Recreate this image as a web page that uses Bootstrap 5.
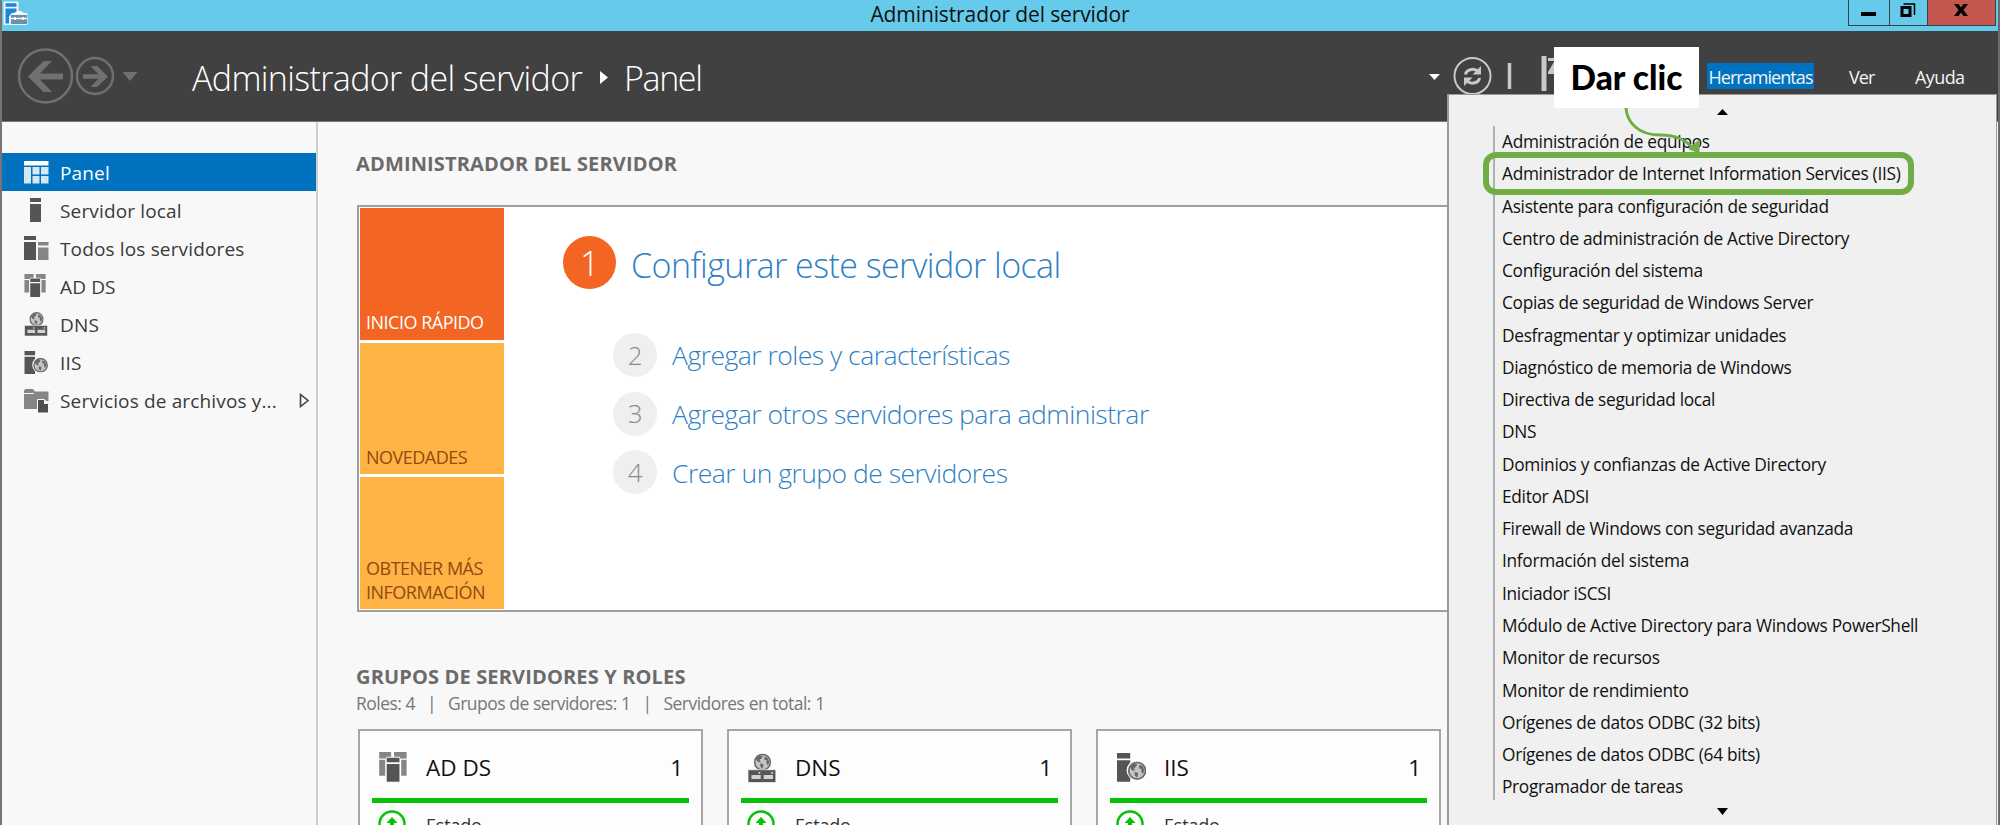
<!DOCTYPE html>
<html lang="es">
<head>
<meta charset="utf-8">
<title>Administrador del servidor</title>
<link rel="stylesheet" href="https://cdn.jsdelivr.net/npm/bootstrap@5.3.0/dist/css/bootstrap.min.css">
<style>
  body { font-family: "Open Sans", "Noto Sans", sans-serif; background: #f8f8f8; color: #333; }
  svg { display: block; flex: none; }
  .win { width: 2000px; height: 825px; border-left: 2px solid #757575; border-right: 2px solid #6b6b6b; }
  .titlebar { height: 31px; background: #66caea; color: #111; }
  .titlebar .caption { font-size: 21px; line-height: 29px; letter-spacing: -.11px; }
  .titlebar .app { left: 1px; top: 1px; }
  .winbtns { right: 2px; top: 0; }
  .winbtns > span { border: 1px solid #33434a; border-top: 0; height: 26px; margin-left: -1px; }
  .wb1 { width: 42px; } .wb2 { width: 39px; } .wb3 { width: 69px; background: #c4584e; }
  .topbar { height: 91px; background: #414141; color: #fff; border-bottom: 1px solid #777; }
  .nav-arrows { padding: 17px 0 0 15px; width: 190px; }
  .crumbs { font-weight: 300; font-size: 34px; line-height: 48px; padding-top: 23px; letter-spacing: -.64px; }
  .crumbs .here { letter-spacing: -1.4px; }
  .crumbs svg { margin: 17px 16px 0 18px; }
  .menu-a { font-size: 18px; line-height: 26px; letter-spacing: -.95px; color: #f4f4f4; padding-top: 32px; }
  .menu-a span { padding-top: 1px; }
  .menu-a .on { background: #0072c0; width: 107px; height: 26px; }
  .ver { width: 27px; margin: 0 39px 0 35px; }
  .ayuda { width: 50px; margin-right: 33px; letter-spacing: -.6px; }
  .side { width: 316px; border-right: 2px solid #cfcfcf; padding-top: 31px; }
  .side .item { height: 38.1px; font-size: 19px; letter-spacing: .15px; padding-left: 22px; color: #3a3a3a; }
  .side .item svg { margin-right: 11px; }
  .side .item span { padding-top: 2px; }
  .side .item.on { background: #0072c0; color: #fff; }
  .side .item .more { margin: 0 6px 0 auto; }
  .main { padding-left: 38px; padding-top: 29px; }
  .hd { font-weight: 700; font-size: 20px; line-height: 26px; letter-spacing: .15px; color: #6b6b6b; }
  .welcome { width: 1180px; height: 407px; margin: 28px 0 0 1px; background: #fff; border: 2px solid #a0a0a0; padding: 1px; }
  .tiles { width: 144px; gap: 3px; }
  .tile { height: 132px; background: #ffb345; color: #8f4a12; font-size: 18px; line-height: 23.3px; letter-spacing: -.5px; padding: 0 0 5px 6px; }
  .tile.hot { background: #f36523; color: #fff; }
  .steps { padding: 28px 0 0 59px; }
  .dot { width: 44px; height: 44px; border-radius: 50%; background: #efefef; color: #8a8a8a; font-size: 26px; margin-right: 15px; font-weight: 300; }
  .dot.big { width: 53px; height: 53px; background: #f36523; color: #fff; font-size: 34px; padding-top: 2px; }
  .step { color: #2e80c4; font-weight: 300; font-size: 26.5px; height: 58.6px; margin-left: 50px; letter-spacing: -.51px; }
  .step .lbl { padding-top: 2px; }
  .step.big { font-size: 34px; height: 53px; margin: 0 0 37px; letter-spacing: -.55px; }
  .step.big .lbl { padding-top: 5px; }
  .grp { margin-top: 52px; }
  .counts { font-size: 17.5px; line-height: 26px; letter-spacing: -.53px; color: #777; word-spacing: .2px; }
  .counts i { width: 33px; text-align: center; font-style: normal; }
  .roles { gap: 24px; margin: 13px 0 0 2px; }
  .role { flex: none; width: 345px; height: 200px; border: 2px solid #a6a6a6; background: #fdfdfd; padding: 0 12px; color: #111; }
  .role .top { height: 67px; padding: 6px 6px 0 7px; font-size: 22.5px; }
  .role .nm { margin-left: 18px; }
  .role .rule { height: 5px; background: #06c206; }
  .role .st { font-size: 18px; padding: 7px 0 0 6px; letter-spacing: -.2px; color: #333; }
  .role .st span { line-height: 24px; margin: 3px 0 0 20px; }
  .tools { left: 1447px; top: 94px; width: 550px; height: 731px; background: #f0f0f0; border: 1px solid #999; border-left-width: 2px; border-bottom: 0; color: #111; }
  .tools .up { margin: 14px 0 0 268px; }
  .tools .down { margin: 8px 0 0 268px; }
  .tools .list { margin: 11px 0 0 44px; border-left: 2px solid #b0b0b0; padding-left: 7px; height: 674px; font-size: 17.3px; line-height: 32.27px; letter-spacing: -.3px; white-space: nowrap; }
  .hl { left: 1483px; top: 152px; width: 431px; height: 43px; border: 6px solid #70ad47; border-radius: 13px; }
  .tip { left: 1554px; top: 47px; width: 145px; height: 61px; background: #fff; color: #000; font: 900 33.5px/61px Lato, sans-serif; white-space: nowrap; }
  .arrow { left: 1610px; top: 104px; }
</style>
</head>
<body>
<svg width="0" height="0" class="position-absolute">
  <defs>
    <symbol id="globe" viewBox="0 0 16 16">
      <circle cx="8" cy="8" r="7.2" fill="#c4c4c4" stroke="#6c6c6c" stroke-width="1.5"/>
      <path d="M2 5l3-3 3 .3-.7 2L5 6l1.500 1.500L4.500 8 3 7zM6 9l3 1.200L8 14 6 12zM9.500 3l3 1 1.700 3.500L13 11l-1.500-2.500L12 6.500 10 6z" fill="#666"/>
    </symbol>
    <symbol id="ad" viewBox="0 0 24 26">
      <path d="M0 0h10v4H6v1.500H0zM12.500 0H23v5.500h-5.500V4h-5zM0 6.500h5V20H0zM18.500 6.500H23V20h-4.500z" fill="#858585"/>
      <path d="M6.300 4.800h10.700V8.600H6.300zM6.300 10h10.700v15H6.300z" fill="#555"/>
    </symbol>
    <symbol id="dns" viewBox="0 0 25 25">
      <use href="#globe" x="5" y="0" width="15" height="15"/>
      <path d="M0 14h24v11H0z" fill="#565656" stroke="#fafafa" stroke-width=".6"/>
      <path d="M3 18.500h8v3.500H3zM13.500 18.500h8v3.500h-8zM9 16h1.500v1.500H9zM20 16h1.500v1.500H20z" fill="#d2d2d2"/>
    </symbol>
    <symbol id="iis" viewBox="0 0 25 25">
      <path d="M0 0h11v4.500H0zM0 6h11v18H0z" fill="#555"/>
      <circle cx="16.500" cy="14.500" r="8.500" fill="#fafafa"/>
      <use href="#globe" x="9" y="7" width="15.500" height="15.500"/>
    </symbol>
  </defs>
</svg>
<div class="win position-relative overflow-hidden">
  <header class="titlebar position-relative text-center">
    <svg class="app position-absolute" width="26" height="25" viewBox="0 0 26 25">
      <path d="M1 1h14v9.500h3v2h6v11H1z" fill="#eaf5fb" stroke="#eaf5fb"/>
      <path d="M2.500 2.200h11v3.600h-11zM2.500 7.500h11v3.500L8 12.500 6 16v6.500H2.500z" fill="#1c86d8"/>
      <path d="M8 14h16v9H8z" fill="#6f8fa8"/>
      <path d="M12 13.500l1.500-2h5.500l1.500 2M8 17.500h16M12 16v3M20 16v3" fill="none" stroke="#fff" stroke-width="1.500"/>
    </svg>
    <span class="caption">Administrador del servidor</span>
    <div class="winbtns position-absolute d-flex">
      <span class="wb1"><svg width="40" height="25"><path d="M12 12h15v4H12z"/></svg></span>
      <span class="wb2"><svg width="37" height="25"><path d="M12 7.500h8v8h-8z" fill="none" stroke="#000" stroke-width="3"/><path d="M13.500 4h11v11" fill="none" stroke="#000" stroke-width="1.500"/></svg></span>
      <span class="wb3"><svg width="67" height="25"><path d="M26 4h4.500l2.500 3.500L35.500 4H40l-4.500 6 4.500 6h-4.500L33 12.500 30.500 16H26l4.500-6z"/></svg></span>
    </div>
  </header>

  <div class="topbar d-flex">
    <div class="nav-arrows">
      <svg width="126" height="56" fill="none" stroke="#707070">
        <circle cx="28.500" cy="28" r="26.500" stroke-width="2.500"/>
        <path d="M46 28.500H16" stroke-width="6"/><path d="M35 13h-8.500L11 28.500 26.500 44H35L20 28.500z" fill="#707070" stroke="none"/>
        <circle cx="78" cy="28" r="18" stroke-width="2.500"/>
        <path d="M66 28.500h20" stroke-width="4.500"/><path d="M73.500 18h6.500l11 10.500L80 39h-6.500l10-10.500z" fill="#707070" stroke="none"/>
        <path d="M105.500 24h15l-7.500 9z" fill="#707070" stroke="none"/>
      </svg>
    </div>
    <div class="crumbs d-flex align-items-start flex-grow-1">
      <span>Administrador del servidor</span>
      <svg width="8" height="13"><path d="M0 0l8 6.500L0 13z" fill="#fff"/></svg>
      <span class="here">Panel</span>
    </div>
    <svg width="278" height="64">
      <path d="M0 43h11l-5.500 6z" fill="#fff"/>
      <g fill="none" stroke="#c9c9c9">
        <circle cx="43.500" cy="45" r="18" stroke-width="2"/>
        <path d="M36.500 43.500c.5-4.500 8-7.500 13-2.500M50.500 47c-.5 4.500-8 7.500-13 2.500" stroke-width="3"/>
        <path d="M80.500 32v26" stroke-width="3.500"/>
      </g>
      <path d="M52 35v8.500h-8.500zM35 55v-8.500h8.500z" fill="#c9c9c9"/>
      <path d="M112.500 25h5v35h-5z" fill="#c9c9c9"/>
      <path d="M119 27h24v16h-24z" fill="#c9c9c9"/>
      <path d="M119 30h6.500l-6.500 11z" fill="#414141"/>
    </svg>
    <div class="menu-a d-flex">
      <span class="on text-center align-self-start">Herramientas</span><span class="ver">Ver</span><span class="ayuda">Ayuda</span>
    </div>
  </div>

  <div class="d-flex">
    <nav class="side flex-shrink-0">
      <div class="item on d-flex align-items-center">
        <svg width="25" height="23"><path d="M0 0h24.500v4.500H0z" fill="#fff"/><path d="M0 6h7v16.500H0zM8.500 6h7v7.500h-7zM17 6h7.500v7.500H17zM8.500 15h7v7.500h-7zM17 15h7.500v7.500H17z" fill="#d3e7f5"/></svg>
        <span>Panel</span></div>
      <div class="item d-flex align-items-center">
        <svg width="25" height="24"><path d="M6 0h11v4H6zM6 6h11v18H6z" fill="#555"/></svg>
        <span>Servidor local</span></div>
      <div class="item d-flex align-items-center">
        <svg width="25" height="24"><path d="M0 0h12v4H0zM0 6h12v18H0z" fill="#555"/><path d="M14 6h10.500v3.500H14zM14 11.500h10.500V24H14z" fill="#858585"/></svg>
        <span>Todos los servidores</span></div>
      <div class="item d-flex align-items-center">
        <svg width="25" height="24"><use href="#ad" width="23" height="24"/></svg><span>AD DS</span></div>
      <div class="item d-flex align-items-center">
        <svg width="25" height="24"><use href="#dns" width="25" height="24"/></svg><span>DNS</span></div>
      <div class="item d-flex align-items-center">
        <svg width="25" height="24"><use href="#iis" width="25" height="24"/></svg><span>IIS</span></div>
      <div class="item d-flex align-items-center">
        <svg width="25" height="24"><path d="M0 1.500L1.500 0h7.500l2 2.500h13.500V12H13v8H0V5h10V4H0z" fill="#858585"/><path d="M13.500 10.500h7l4 4V24h-11z" fill="#4f4f4f" stroke="#fafafa"/><path d="M20 10.500v4.500h4.500z" fill="#fafafa"/></svg>
        <span>Servicios de archivos y...</span>
        <svg class="more" width="11" height="15"><path d="M1.500 1.500v12l7.500-6z" fill="none" stroke="#444" stroke-width="1.600"/></svg></div>
    </nav>

    <main class="main">
      <div class="hd">ADMINISTRADOR DEL SERVIDOR</div>
      <section class="welcome d-flex">
        <div class="tiles d-flex flex-column">
          <div class="tile hot d-flex align-items-end">INICIO RÁPIDO</div>
          <div class="tile d-flex align-items-end">NOVEDADES</div>
          <div class="tile d-flex align-items-end">OBTENER MÁS<br>INFORMACIÓN</div>
        </div>
        <div class="steps">
          <div class="step big d-flex align-items-center"><span class="dot big d-flex align-items-center justify-content-center">1</span><span class="lbl">Configurar este servidor local</span></div>
          <div class="step d-flex align-items-center"><span class="dot d-flex align-items-center justify-content-center">2</span><span class="lbl">Agregar roles y características</span></div>
          <div class="step d-flex align-items-center"><span class="dot d-flex align-items-center justify-content-center">3</span><span class="lbl">Agregar otros servidores para administrar</span></div>
          <div class="step d-flex align-items-center"><span class="dot d-flex align-items-center justify-content-center">4</span><span class="lbl">Crear un grupo de servidores</span></div>
        </div>
      </section>
      <div class="hd grp">GRUPOS DE SERVIDORES Y ROLES</div>
      <div class="counts d-flex"><span>Roles: 4</span><i>|</i><span>Grupos de servidores: 1</span><i>|</i><span>Servidores en total: 1</span></div>
      <div class="roles d-flex">
        <div class="role">
          <div class="top d-flex align-items-center"><svg width="29" height="31"><use href="#ad" width="29" height="31"/></svg><span class="nm">AD DS</span><span class="ms-auto">1</span></div>
          <div class="rule"></div>
          <div class="st d-flex"><svg width="28" height="28"><circle cx="14" cy="14" r="12.500" fill="none" stroke="#06c206" stroke-width="2.500"/><path d="M14 7l5.500 6H16v8h-4v-8H8.500z" fill="#06c206"/></svg><span>Estado</span></div>
        </div>
        <div class="role">
          <div class="top d-flex align-items-center"><svg width="29" height="31"><use href="#dns" x="0" y="1" width="29" height="30"/></svg><span class="nm">DNS</span><span class="ms-auto">1</span></div>
          <div class="rule"></div>
          <div class="st d-flex"><svg width="28" height="28"><circle cx="14" cy="14" r="12.500" fill="none" stroke="#06c206" stroke-width="2.500"/><path d="M14 7l5.500 6H16v8h-4v-8H8.500z" fill="#06c206"/></svg><span>Estado</span></div>
        </div>
        <div class="role">
          <div class="top d-flex align-items-center"><svg width="29" height="31"><use href="#iis" x="0" y="1" width="30" height="30"/></svg><span class="nm">IIS</span><span class="ms-auto">1</span></div>
          <div class="rule"></div>
          <div class="st d-flex"><svg width="28" height="28"><circle cx="14" cy="14" r="12.500" fill="none" stroke="#06c206" stroke-width="2.500"/><path d="M14 7l5.500 6H16v8h-4v-8H8.500z" fill="#06c206"/></svg><span>Estado</span></div>
        </div>
      </div>
    </main>
  </div>
</div>

<div class="tools position-absolute overflow-hidden">
  <svg class="up" width="11" height="6"><path d="M0 6h11L5.500 0z"/></svg>
  <div class="list">
    <div>Administración de equipos</div>
    <div>Administrador de Internet Information Services (IIS)</div>
    <div>Asistente para configuración de seguridad</div>
    <div>Centro de administración de Active Directory</div>
    <div>Configuración del sistema</div>
    <div>Copias de seguridad de Windows Server</div>
    <div>Desfragmentar y optimizar unidades</div>
    <div>Diagnóstico de memoria de Windows</div>
    <div>Directiva de seguridad local</div>
    <div>DNS</div>
    <div>Dominios y confianzas de Active Directory</div>
    <div>Editor ADSI</div>
    <div>Firewall de Windows con seguridad avanzada</div>
    <div>Información del sistema</div>
    <div>Iniciador iSCSI</div>
    <div>Módulo de Active Directory para Windows PowerShell</div>
    <div>Monitor de recursos</div>
    <div>Monitor de rendimiento</div>
    <div>Orígenes de datos ODBC (32 bits)</div>
    <div>Orígenes de datos ODBC (64 bits)</div>
    <div>Programador de tareas</div>
  </div>
  <svg class="down" width="11" height="7"><path d="M0 0h11L5.500 7z"/></svg>
</div>
<div class="hl position-absolute"></div>
<div class="tip position-absolute text-center">Dar clic</div>
<svg class="arrow position-absolute" width="100" height="52"><path d="M16 4c1 14 12 27 34 27 18 0 26 6 32 12" fill="none" stroke="#70ad47" stroke-width="3"/><path d="M79 45l10 4V36z" fill="#70ad47" stroke="#70ad47"/></svg>
<script src="https://cdn.jsdelivr.net/npm/bootstrap@5.3.0/dist/js/bootstrap.bundle.min.js"></script>
</body>
</html>
